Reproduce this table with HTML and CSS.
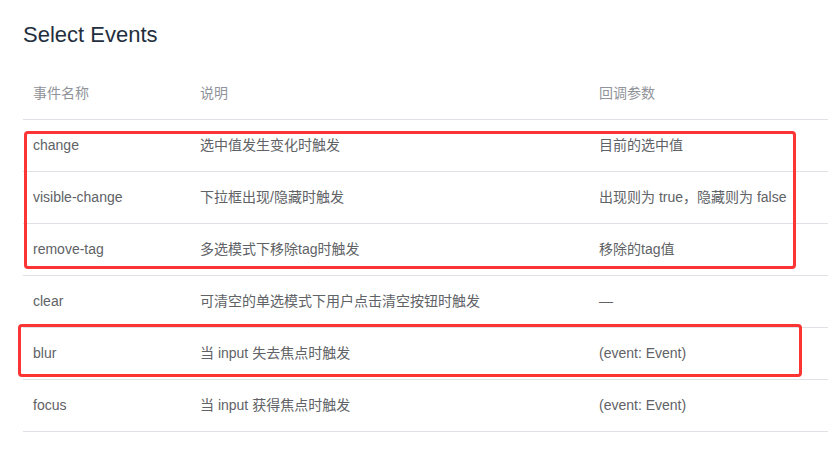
FILE: index.html
```html
<!DOCTYPE html>
<html lang="zh">
<head>
<meta charset="utf-8">
<title>Select Events</title>
<link rel="stylesheet" href="styles.css">
</head>
<body>
<div class="page">
  <h3 class="title">Select Events</h3>
  <div class="table-wrap">
    <table class="events">
      <thead>
        <tr><th class="c1">事件名称</th><th class="c2">说明</th><th>回调参数</th></tr>
      </thead>
      <tbody>
        <tr><td>change</td><td>选中值发生变化时触发</td><td>目前的选中值</td></tr>
        <tr><td>visible-change</td><td>下拉框出现/隐藏时触发</td><td>出现则为 true，隐藏则为 false</td></tr>
        <tr><td>remove-tag</td><td>多选模式下移除tag时触发</td><td>移除的tag值</td></tr>
        <tr><td>clear</td><td>可清空的单选模式下用户点击清空按钮时触发</td><td>—</td></tr>
        <tr><td>blur</td><td>当 input 失去焦点时触发</td><td>(event: Event)</td></tr>
        <tr><td>focus</td><td>当 input 获得焦点时触发</td><td>(event: Event)</td></tr>
      </tbody>
    </table>
    <div class="mark mark-a"></div>
    <div class="mark mark-b"></div>
  </div>
</div>
</body>
</html>
```

FILE: styles.css
```css
html, body {
  margin: 0;
  padding: 0;
  background: #fff;
}
.page {
  padding: 18px 0 0 23px;
  font-family: "Liberation Sans", Arial, "Noto Sans CJK SC", sans-serif;
}
.title {
  margin: 0 0 17px;
  font-size: 22px;
  font-weight: normal;
  line-height: 33px;
  color: #1f2f3d;
}
.table-wrap {
  position: relative;
}
.events {
  width: 100%;
  border-collapse: collapse;
  font-size: 14px;
  line-height: 21px;
}
.events th,
.events td {
  text-align: left;
  padding: 15px 10px;
  border-bottom: 1px solid #dfe1e6;
  white-space: nowrap;
}
.events th {
  font-weight: normal;
  color: #909399;
}
.events td {
  color: #606266;
}
.c1 { width: 147px; }
.c2 { width: 379px; }
.mark {
  position: absolute;
  border: 3px solid #fc3434;
  border-radius: 4px;
  box-sizing: border-box;
}
.mark-a {
  left: 1px;
  top: 63px;
  width: 772px;
  height: 138px;
}
.mark-b {
  left: -5px;
  top: 256px;
  width: 784px;
  height: 53px;
}
```
